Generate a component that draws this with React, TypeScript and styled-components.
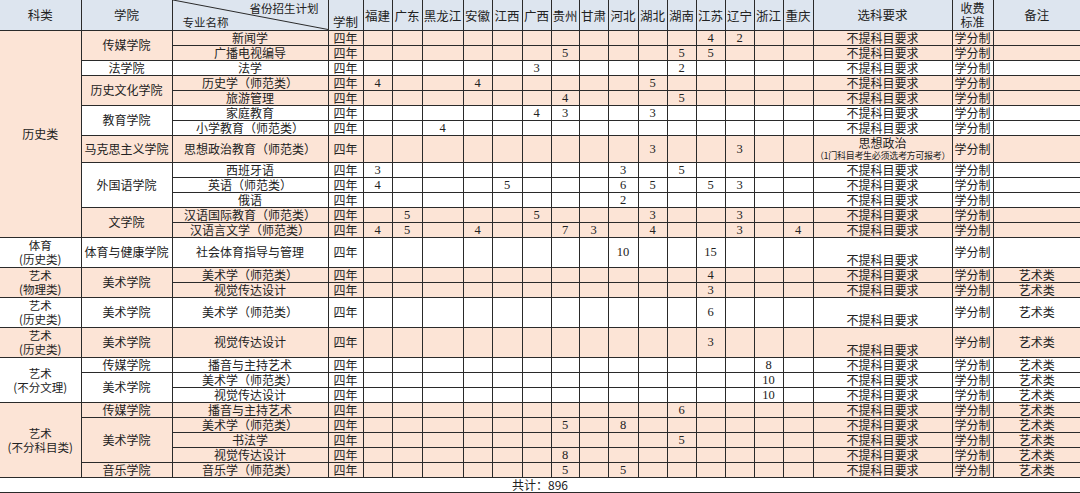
import React from 'react';
import styled, { createGlobalStyle } from 'styled-components';

const LINE = '#2a2a2a';
const PEACH = '#fce4d6';
const HEAD = '#dde5ef';

const GlobalStyle = createGlobalStyle`
  html, body { margin: 0; padding: 0; background: #fff; }
  body { font-family: "Noto Sans CJK SC", "Noto Sans", sans-serif; color: #222; }
`;

const Sheet = styled.table`
  width: 1080px;
  table-layout: fixed;
  border-collapse: collapse;
  border-top: hidden;
  border-left: hidden;
  border-right: hidden;
  font-size: 12px;
  line-height: 14px;
`;

const Col = styled.col<{ $w: number }>`
  width: ${(p) => p.$w}px;
`;

const HeadRow = styled.tr`
  height: 30px;
  background: ${HEAD};
`;

const Th = styled.th<{ $v?: string; $pt?: number; $pb?: number }>`
  border: 1px solid ${LINE};
  padding: ${(p) => p.$pt || 0}px 0 ${(p) => p.$pb || 0}px 0;
  font-weight: normal;
  font-size: 12.5px;
  line-height: 14px;
  text-align: center;
  vertical-align: ${(p) => p.$v || 'middle'};
  white-space: nowrap;
`;

const StackTh = styled(Th)`
  font-size: 12px;
  line-height: 14px;
`;

const DiagonalTh = styled(Th)`
  position: relative;
  font-size: 11.5px;
`;

const DiagonalLine = styled.svg`
  position: absolute;
  top: 0;
  left: 0;
  width: 100%;
  height: 100%;
`;

const HeadLabels = styled.div`
  position: relative;
  display: flex;
  flex-direction: column;
  height: 29px;
  justify-content: space-between;
`;

const PlanLabel = styled.span`
  align-self: flex-end;
  padding-right: 9px;
  line-height: 13px;
  margin-top: 2px;
`;

const MajorLabel = styled.span`
  align-self: flex-start;
  padding-left: 10px;
  line-height: 13px;
`;

const Row = styled.tr<{ $h: number; $tint?: boolean }>`
  height: ${(p) => p.$h}px;
  background: ${(p) => (p.$tint ? PEACH : '#fff')};
`;

const Td = styled.td<{ $v?: string; $fill?: 'peach' | 'white' }>`
  border: 1px solid ${LINE};
  padding: 0;
  text-align: center;
  vertical-align: ${(p) => p.$v || 'middle'};
  white-space: nowrap;
  overflow: hidden;
  background: ${(p) => (p.$fill === 'peach' ? PEACH : p.$fill === 'white' ? '#fff' : 'transparent')};
`;

const NumTd = styled(Td)`
  font-family: "Liberation Serif", "DejaVu Serif", serif;
  font-size: 12.5px;
`;

const Line = styled.span<{ $small?: boolean }>`
  display: block;
  font-size: ${(p) => (p.$small ? 11.5 : 12)}px;
  line-height: 14px;
`;

const ReqNote = styled.span`
  display: block;
  font-size: 9px;
  line-height: 11px;
  letter-spacing: -0.3px;
`;

const TotalTd = styled.td`
  border: 1px solid ${LINE};
  padding: 0;
  text-align: center;
  line-height: 14px;
  background: #fff;
`;

const PROVINCES = ['福建', '广东', '黑龙江', '安徽', '江西', '广西', '贵州', '甘肃', '河北', '湖北', '湖南', '江苏', '辽宁', '浙江', '重庆'];
const WIDTHS = [81, 91, 156, 35, 29, 30, 41, 29, 30, 29, 28, 29, 30, 29, 29, 29, 29, 29, 30, 139, 41, 87];

type Span = { t: string[]; span: number; tint?: boolean };
type RowData = {
  ke?: Span;
  yuan?: Span;
  m: string;
  n: Record<string, number>;
  tint?: boolean;
  h?: number;
  tall?: boolean;
  art?: boolean;
  special?: boolean;
};

const ROWS: RowData[] = [
  { ke: { t: ['历史类'], span: 13, tint: true }, yuan: { t: ['传媒学院'], span: 2, tint: true }, m: '新闻学', n: { 江苏: 4, 辽宁: 2 }, tint: true },
  { m: '广播电视编导', n: { 贵州: 5, 湖南: 5, 江苏: 5 }, tint: true },
  { yuan: { t: ['法学院'], span: 1 }, m: '法学', n: { 广西: 3, 湖南: 2 } },
  { yuan: { t: ['历史文化学院'], span: 2, tint: true }, m: '历史学（师范类）', n: { 福建: 4, 安徽: 4, 湖北: 5 }, tint: true },
  { m: '旅游管理', n: { 贵州: 4, 湖南: 5 }, tint: true },
  { yuan: { t: ['教育学院'], span: 2 }, m: '家庭教育', n: { 广西: 4, 贵州: 3, 湖北: 3 } },
  { m: '小学教育（师范类）', n: { 黑龙江: 4 } },
  { yuan: { t: ['马克思主义学院'], span: 1, tint: true }, m: '思想政治教育（师范类）', n: { 湖北: 3, 辽宁: 3 }, tint: true, h: 27, special: true },
  { yuan: { t: ['外国语学院'], span: 3 }, m: '西班牙语', n: { 福建: 3, 河北: 3, 湖南: 5 } },
  { m: '英语（师范类）', n: { 福建: 4, 江西: 5, 河北: 6, 湖北: 5, 江苏: 5, 辽宁: 3 } },
  { m: '俄语', n: { 河北: 2 } },
  { yuan: { t: ['文学院'], span: 2, tint: true }, m: '汉语国际教育（师范类）', n: { 广东: 5, 广西: 5, 湖北: 3, 辽宁: 3 }, tint: true },
  { m: '汉语言文学（师范类）', n: { 福建: 4, 广东: 5, 安徽: 4, 贵州: 7, 甘肃: 3, 湖北: 4, 辽宁: 3, 重庆: 4 }, tint: true },
  { ke: { t: ['体育', '(历史类)'], span: 1 }, yuan: { t: ['体育与健康学院'], span: 1 }, m: '社会体育指导与管理', n: { 河北: 10, 江苏: 15 }, h: 30, tall: true },
  { ke: { t: ['艺术', '(物理类)'], span: 2, tint: true }, yuan: { t: ['美术学院'], span: 2, tint: true }, m: '美术学（师范类）', n: { 江苏: 4 }, tint: true, art: true },
  { m: '视觉传达设计', n: { 江苏: 3 }, tint: true, art: true },
  { ke: { t: ['艺术', '(历史类)'], span: 1 }, yuan: { t: ['美术学院'], span: 1 }, m: '美术学（师范类）', n: { 江苏: 6 }, h: 30, tall: true, art: true },
  { ke: { t: ['艺术', '(历史类)'], span: 1, tint: true }, yuan: { t: ['美术学院'], span: 1, tint: true }, m: '视觉传达设计', n: { 江苏: 3 }, h: 30, tall: true, art: true, tint: true },
  { ke: { t: ['艺术', '(不分文理)'], span: 3 }, yuan: { t: ['传媒学院'], span: 1 }, m: '播音与主持艺术', n: { 浙江: 8 }, art: true },
  { yuan: { t: ['美术学院'], span: 2 }, m: '美术学（师范类）', n: { 浙江: 10 }, art: true },
  { m: '视觉传达设计', n: { 浙江: 10 }, art: true },
  { ke: { t: ['艺术', '(不分科目类)'], span: 5, tint: true }, yuan: { t: ['传媒学院'], span: 1, tint: true }, m: '播音与主持艺术', n: { 湖南: 6 }, art: true, tint: true },
  { yuan: { t: ['美术学院'], span: 3, tint: true }, m: '美术学（师范类）', n: { 贵州: 5, 河北: 8 }, art: true, tint: true },
  { m: '书法学', n: { 湖南: 5 }, art: true, tint: true },
  { m: '视觉传达设计', n: { 贵州: 8 }, art: true, tint: true },
  { yuan: { t: ['音乐学院'], span: 1, tint: true }, m: '音乐学（师范类）', n: { 贵州: 5, 河北: 5 }, art: true, tint: true },
];

const SpanCell = ({ s }: { s: Span }) => (
  <Td rowSpan={s.span} $fill={s.tint ? 'peach' : 'white'}>
    {s.t.map((line) => (
      <Line key={line} $small={s.t.length > 1}>
        {line}
      </Line>
    ))}
  </Td>
);

export default function App() {
  return (
    <>
      <GlobalStyle />
      <Sheet>
        <colgroup>
          {WIDTHS.map((w, i) => (
            <Col key={i} $w={w} />
          ))}
        </colgroup>
        <thead>
          <HeadRow>
            <Th>科类</Th>
            <Th>学院</Th>
            <DiagonalTh>
              <DiagonalLine viewBox="0 0 100 100" preserveAspectRatio="none">
                <line x1="0" y1="0" x2="100" y2="100" stroke={LINE} strokeWidth="1" vectorEffect="non-scaling-stroke" />
              </DiagonalLine>
              <HeadLabels>
                <PlanLabel>省份招生计划</PlanLabel>
                <MajorLabel>专业名称</MajorLabel>
              </HeadLabels>
            </DiagonalTh>
            <Th $v="bottom" $pb={1}>学制</Th>
            {PROVINCES.map((p) => (
              <Th key={p} $pt={3}>
                {p}
              </Th>
            ))}
            <Th>选科要求</Th>
            <StackTh>
              收费
              <br />
              标准
            </StackTh>
            <Th>备注</Th>
          </HeadRow>
        </thead>
        <tbody>
          {ROWS.map((r, i) => (
            <Row key={i} $h={r.h || 15} $tint={r.tint}>
              {r.ke && <SpanCell s={r.ke} />}
              {r.yuan && <SpanCell s={r.yuan} />}
              <Td>{r.m}</Td>
              <Td>四年</Td>
              {PROVINCES.map((p) => (
                <NumTd key={p}>{r.n[p] ?? ''}</NumTd>
              ))}
              {r.special ? (
                <Td>
                  <Line>思想政治</Line>
                  <ReqNote>（1门科目考生必须选考方可报考）</ReqNote>
                </Td>
              ) : (
                <Td $v={r.tall ? 'bottom' : 'middle'}>不提科目要求</Td>
              )}
              <Td>学分制</Td>
              <Td>{r.art ? '艺术类' : ''}</Td>
            </Row>
          ))}
          <Row $h={15}>
            <TotalTd colSpan={22}>共计：896</TotalTd>
          </Row>
        </tbody>
      </Sheet>
    </>
  );
}
